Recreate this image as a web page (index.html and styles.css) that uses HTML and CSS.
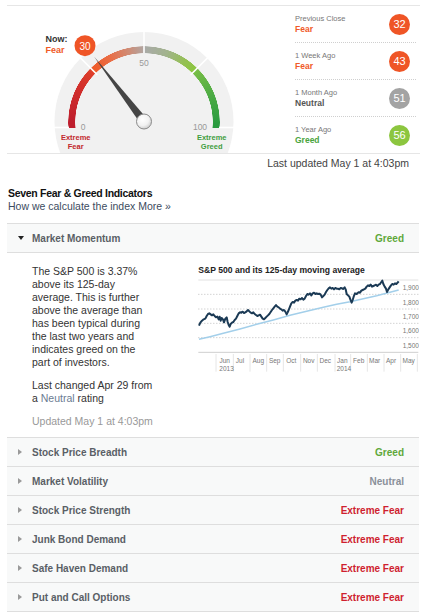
FILE: index.html
```html
<!DOCTYPE html>
<html>
<head>
<meta charset="utf-8">
<link rel="stylesheet" href="styles.css">
</head>
<body>
<div class="page">
  <section class="summary">
    <div class="gauge">
      <svg class="gauge-layer" width="250" height="147" viewBox="7 6 250 147">
        <circle cx="144" cy="121.5" r="89.5" fill="#f1f1f1"/>
      </svg>
      <div class="arc-clip"><div class="arc-ring"></div></div>
      <svg class="gauge-layer" width="250" height="147" viewBox="7 6 250 147">
        <g stroke="#fff" stroke-width="1.6">
          <line x1="97.3" y1="74.8" x2="80.4" y2="57.9"/>
          <line x1="144" y1="53" x2="144" y2="31.5"/>
          <line x1="190.7" y1="74.8" x2="207.6" y2="57.9"/>
          <line x1="54" y1="127.5" x2="69" y2="127.5"/>
          <line x1="219" y1="127.5" x2="234" y2="127.5"/>
        </g>
        <g class="g-num">
          <text x="83" y="127" text-anchor="middle">0</text>
          <text x="144" y="63" text-anchor="middle">50</text>
          <text x="200" y="127" text-anchor="middle">100</text>
        </g>
        <g class="g-ext fear">
          <text x="75.7" y="137" text-anchor="middle">Extreme</text>
          <text x="75.7" y="146" text-anchor="middle">Fear</text>
        </g>
        <g class="g-ext greed">
          <text x="211.7" y="137" text-anchor="middle">Extreme</text>
          <text x="211.7" y="146" text-anchor="middle">Greed</text>
        </g>
        <text class="g-now" x="45.5" y="38.5">Now:</text>
        <text class="g-nowval" x="45.5" y="49.5">Fear</text>
        <defs>
          <radialGradient id="knob" cx="40%" cy="35%" r="70%">
            <stop offset="0" stop-color="#ffffff"/>
            <stop offset="0.6" stop-color="#f2f2f2"/>
            <stop offset="1" stop-color="#c8c8c8"/>
          </radialGradient>
        </defs>
        <polygon points="94,56.5 147.4,119.2 140.6,123.8" fill="#454545"/>
        <circle cx="144" cy="121.5" r="7.5" fill="url(#knob)" stroke="#8a8a8a" stroke-width="1"/>
        <circle cx="85" cy="45.7" r="10.5" fill="#ef5526"/>
        <text class="g-badge" x="85" y="46" text-anchor="middle">30</text>
      </svg>
    </div>
    <ul class="history">
      <li class="hist-item">
        <div class="hist-text"><span class="hist-label">Previous Close</span><span class="hist-val fear">Fear</span></div>
        <span class="badge b-fear">32</span>
      </li>
      <li class="hist-item">
        <div class="hist-text"><span class="hist-label">1 Week Ago</span><span class="hist-val fear">Fear</span></div>
        <span class="badge b-fear">43</span>
      </li>
      <li class="hist-item">
        <div class="hist-text"><span class="hist-label">1 Month Ago</span><span class="hist-val neutral">Neutral</span></div>
        <span class="badge b-neutral">51</span>
      </li>
      <li class="hist-item">
        <div class="hist-text"><span class="hist-label">1 Year Ago</span><span class="hist-val greed">Greed</span></div>
        <span class="badge b-greed">56</span>
      </li>
    </ul>
  </section>
  <div class="updated">Last updated May 1 at 4:03pm</div>

  <h2 class="title">Seven Fear &amp; Greed Indicators</h2>
  <div class="sub">How we calculate the index <a class="more">More »</a></div>

  <div class="indicators">
    <div class="ind open">
      <div class="ind-head"><span class="caret-down"></span><span class="ind-name">Market Momentum</span><span class="rating r-greed">Greed</span></div>
      <div class="ind-body">
        <div class="desc">
          <p>The S&amp;P 500 is 3.37% above its 125-day average. This is further above the average than has been typical during the last two years and indicates greed on the part of investors.</p>
          <p>Last changed Apr 29 from a <span class="link">Neutral</span> rating</p>
          <p class="desc-upd">Updated May 1 at 4:03pm</p>
        </div>
        <svg class="chart" width="229" height="120" viewBox="0 15 687 360">
          <text class="c-title" x="25" y="30">S&amp;P 500 and its 125-day moving average</text>
          <line x1="25" y1="60" x2="685" y2="60" stroke="#e2e2e2" stroke-width="3"/>
          <g stroke="#bdbdbd" stroke-width="3" stroke-dasharray="3 6">
            <line x1="25" y1="103" x2="685" y2="103"/>
            <line x1="25" y1="147" x2="685" y2="147"/>
            <line x1="25" y1="190" x2="685" y2="190"/>
            <line x1="25" y1="233" x2="685" y2="233"/>
          </g>
          <line x1="25" y1="277" x2="685" y2="277" stroke="#cfcfcf" stroke-width="3"/>
          <g stroke="#e6e6e6" stroke-width="3">
            <line x1="78" y1="282" x2="78" y2="335"/>
            <line x1="130" y1="282" x2="130" y2="335"/>
            <line x1="180" y1="282" x2="180" y2="335"/>
            <line x1="230" y1="282" x2="230" y2="335"/>
            <line x1="280" y1="282" x2="280" y2="335"/>
            <line x1="332" y1="282" x2="332" y2="335"/>
            <line x1="382" y1="282" x2="382" y2="335"/>
            <line x1="435" y1="282" x2="435" y2="335"/>
            <line x1="482" y1="282" x2="482" y2="335"/>
            <line x1="532" y1="282" x2="532" y2="335"/>
            <line x1="582" y1="282" x2="582" y2="335"/>
            <line x1="632" y1="282" x2="632" y2="335"/>
            <line x1="682" y1="282" x2="682" y2="335"/>
          </g>
          <polyline fill="none" stroke="#a3cfea" stroke-width="4.5" points="27,238 60,230 100,220 150,207 200,193 250,180 300,166 350,154 400,142 440,133 480,125 520,116 560,107 600,97 626,90"/>
          <polyline fill="none" stroke="#1b3a55" stroke-width="6" stroke-linejoin="round" points="27,197 31,188 36,182 41,178 46,176 50,168 54,162 58,160 62,163 66,166 70,163 74,168 78,172 82,170 86,178 89,170 92,182 95,174 99,178 102,187 106,176 110,172 113,186 116,195 119,200 122,192 126,188 130,186 134,180 138,176 142,168 146,160 150,157 154,158 158,155 162,159 166,157 170,154 174,150 178,154 182,158 186,160 190,157 194,162 198,165 202,168 206,166 210,164 214,170 218,176 222,178 226,174 230,170 234,166 238,162 242,156 246,150 250,145 254,140 258,135 262,140 266,142 270,146 274,148 278,152 282,150 286,155 290,163 293,157 296,150 300,140 304,130 308,126 312,128 316,122 320,120 324,122 328,116 332,118 336,114 340,119 344,116 348,108 352,102 356,104 360,100 364,106 368,100 372,98 376,102 380,100 384,102 388,101 392,104 396,112 400,108 404,104 408,96 412,90 416,85 420,82 424,86 428,84 432,88 436,84 440,86 444,86 448,88 452,84 456,85 460,87 464,82 467,88 470,102 474,106 478,110 481,118 485,128 488,120 491,110 495,100 500,102 505,97 510,98 514,92 518,90 522,88 526,86 530,80 534,76 538,78 542,74 546,80 550,78 554,76 558,74 562,78 566,74 570,72 574,66 577,62 580,72 584,80 588,86 591,96 595,88 599,82 603,76 607,72 611,74 615,70 619,72 623,68 626,64"/>
          <g class="c-lab">
            <text x="638" y="83">1,900</text>
            <text x="638" y="127">1,800</text>
            <text x="638" y="168">1,700</text>
            <text x="638" y="212">1,600</text>
            <text x="638" y="255">1,500</text>
          </g>
          <g class="c-lab" text-anchor="middle">
            <text x="104" y="300">Jun</text>
            <text x="150" y="300">Jul</text>
            <text x="205" y="300">Aug</text>
            <text x="254" y="300">Sep</text>
            <text x="304" y="300">Oct</text>
            <text x="356" y="300">Nov</text>
            <text x="406" y="300">Dec</text>
            <text x="457" y="300">Jan</text>
            <text x="506" y="300">Feb</text>
            <text x="554" y="300">Mar</text>
            <text x="603" y="300">Apr</text>
            <text x="656" y="300">May</text>
          </g>
          <g class="c-lab">
            <text x="88" y="325">2013</text>
            <text x="440" y="325">2014</text>
          </g>
        </svg>
      </div>
    </div>
    <div class="ind"><div class="ind-head"><span class="caret-right"></span><span class="ind-name">Stock Price Breadth</span><span class="rating r-greed">Greed</span></div></div>
    <div class="ind"><div class="ind-head"><span class="caret-right"></span><span class="ind-name">Market Volatility</span><span class="rating r-neutral">Neutral</span></div></div>
    <div class="ind"><div class="ind-head"><span class="caret-right"></span><span class="ind-name">Stock Price Strength</span><span class="rating r-xfear">Extreme Fear</span></div></div>
    <div class="ind"><div class="ind-head"><span class="caret-right"></span><span class="ind-name">Junk Bond Demand</span><span class="rating r-xfear">Extreme Fear</span></div></div>
    <div class="ind"><div class="ind-head"><span class="caret-right"></span><span class="ind-name">Safe Haven Demand</span><span class="rating r-xfear">Extreme Fear</span></div></div>
    <div class="ind"><div class="ind-head"><span class="caret-right"></span><span class="ind-name">Put and Call Options</span><span class="rating r-xfear">Extreme Fear</span></div></div>
  </div>
</div>
</body>
</html>
```
FILE: styles.css
```css
* { box-sizing: border-box; }
html, body { margin: 0; padding: 0; background: #fff; }
body {
  font-family: "Liberation Sans", Arial, sans-serif;
  color: #333;
  font-size: 10.5px;
}
.page {
  margin: 5px 7px 0 7px;
  width: 413px;
}

/* summary */
.summary {
  display: flex;
  border-top: 1px solid #e6e6e6;
  border-bottom: 1px solid #e6e6e6;
  height: 149px;
}
.gauge {
  position: relative;
  width: 250px;
  height: 147px;
}
.gauge-layer {
  position: absolute;
  left: 0;
  top: 0;
  display: block;
}
.arc-clip {
  position: absolute;
  left: 61px;
  top: 39.5px;
  width: 152px;
  height: 82px;
  overflow: hidden;
}
.arc-ring {
  width: 152px;
  height: 152px;
  border-radius: 50%;
  background: conic-gradient(from 270deg,
    #be1e2d 0deg, #d3302b 30deg, #de3f2b 44deg,
    #f05a28 45.5deg, #ea6d45 62deg, #cf8c76 78deg, #b1a5a0 89.5deg,
    #a9aaa7 90.5deg, #a2b38e 108deg, #94c052 124deg, #8cc63f 134deg,
    #77bd45 135.5deg, #4dab44 158deg, #2a9b40 182deg,
    #2a9b40 270deg, #be1e2d 270deg);
  -webkit-mask-image: radial-gradient(circle closest-side, transparent 68.5px, #000 69px, #000 75.5px, transparent 76px);
  mask-image: radial-gradient(circle closest-side, transparent 68.5px, #000 69px, #000 75.5px, transparent 76px);
}
.g-num text { font-size: 8.5px; fill: #999; dominant-baseline: central; }
.g-ext text { font-size: 7.5px; font-weight: bold; dominant-baseline: central; }
.g-ext.fear text { fill: #c1272d; }
.g-ext.greed text { fill: #3f9e3e; }
.g-now { font-size: 9px; font-weight: bold; fill: #333; dominant-baseline: central; }
.g-nowval { font-size: 9px; font-weight: bold; fill: #f05a28; dominant-baseline: central; }
.g-badge { font-size: 10px; fill: #fff; dominant-baseline: central; }

.history {
  list-style: none;
  margin: 0 4px 0 auto;
  padding: 0;
  width: 121px;
}
.hist-item {
  height: 37px;
  display: flex;
  align-items: center;
  justify-content: space-between;
  padding-right: 6px;
  border-bottom: 1px dotted #cfcfcf;
}
.hist-item:last-child { border-bottom: none; height: 36px; }
.hist-text { display: flex; flex-direction: column; }
.hist-label { font-size: 7.5px; line-height: 10px; color: #777; }
.hist-val { font-size: 8.5px; line-height: 10px; font-weight: bold; }
.hist-val.fear { color: #f05a28; }
.hist-val.neutral { color: #555; }
.hist-val.greed { color: #4aa43e; }
.badge {
  width: 21px;
  height: 21px;
  border-radius: 50%;
  color: #fff;
  font-size: 11px;
  display: flex;
  align-items: center;
  justify-content: center;
}
.b-fear { background: #ef5526; }
.b-neutral { background: #a3a3a3; }
.b-greed { background: #8cc63f; }

.updated {
  text-align: right;
  padding-right: 11px;
  margin-top: 3px;
  line-height: 13px;
  color: #444;
}

.title {
  margin: 16px 0 0 1px;
  font-size: 10.5px;
  line-height: 14px;
  font-weight: bold;
  letter-spacing: -0.3px;
  color: #111;
}
.sub {
  margin-left: 1px;
  line-height: 13px;
  color: #3c4b60;
}
.more { color: #3c4b60; }

.indicators {
  margin-top: 10px;
  width: 412px;
}
.ind { border-top: 1px solid #dedede; }
.ind:last-child { border-bottom: 1px solid #dedede; }
.ind-head {
  height: 28px;
  display: flex;
  align-items: center;
  padding: 0 15px 0 11px;
  background: #f8f9f9;
  font-size: 10px;
  font-weight: bold;
}
.caret-down {
  width: 14px;
  height: 4px;
  position: relative;
}
.caret-down::before {
  content: "";
  position: absolute;
  left: 0;
  top: 0;
  border-left: 3px solid transparent;
  border-right: 3px solid transparent;
  border-top: 4px solid #222;
}
.caret-right {
  width: 14px;
  height: 7px;
  position: relative;
}
.caret-right::before {
  content: "";
  position: absolute;
  left: 0;
  top: 0;
  border-top: 3.5px solid transparent;
  border-bottom: 3.5px solid transparent;
  border-left: 4px solid #9a9a9a;
}
.ind-name { color: #5a5f66; flex: 1; }
.rating { text-align: right; }
.r-greed { color: #5fa83a; }
.r-neutral { color: #8a9099; }
.r-xfear { color: #cf1f30; }

.ind-body {
  border-top: 1px solid #dedede;
  display: flex;
  padding: 12px 0 9px 25px;
  background: #fff;
}
.desc { width: 122.5px; flex: none; }
.desc p { margin: 0 0 10px 0; line-height: 13px; color: #333; }
.desc p.desc-upd { margin: 0; color: #999; }
.link { color: #6a7b92; }
.chart { display: block; margin-left: 35.5px; flex: none; }
.c-title { font-size: 25.8px; font-weight: bold; fill: #222; dominant-baseline: central; }
.c-lab text { font-size: 19.5px; fill: #777; dominant-baseline: central; }
```
